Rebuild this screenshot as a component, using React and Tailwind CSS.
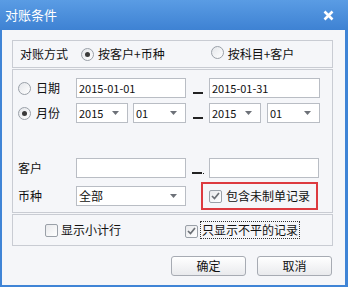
import React from "react";

const font = { fontFamily: '"Noto Sans CJK SC", "Noto Sans", sans-serif' };

function Radio({ checked }) {
  return (
    <span className="relative inline-flex h-[13px] w-[13px] shrink-0 items-center justify-center rounded-full border border-[#9aa0a8] bg-gradient-to-br from-[#e4e6ea] to-white">
      {checked && <span className="h-[5px] w-[5px] rounded-full bg-[#3a3a3a]" />}
    </span>
  );
}

function Check({ checked }) {
  return (
    <span className="inline-flex h-[13px] w-[13px] shrink-0 items-center justify-center rounded-[2px] border border-[#9aa0a8] bg-gradient-to-br from-[#e8e9ec] to-white">
      {checked && (
        <svg width="9" height="8" viewBox="0 0 9 8">
          <path d="M1 4 L3.5 6.5 L8 1" fill="none" stroke="#6b6f75" strokeWidth="1.7" />
        </svg>
      )}
    </span>
  );
}

function Arrow() {
  return (
    <svg width="7" height="4" viewBox="0 0 7 4" className="shrink-0">
      <path d="M0 0 L7 0 L3.5 4 Z" fill="#6d7178" />
    </svg>
  );
}

function Field({ w, children }) {
  return (
    <div
      className="flex h-[20px] shrink-0 items-center border border-[#b9bdc4] bg-white pl-[2px] text-[11px] text-[#111]"
      style={{ width: w }}
    >
      {children}
    </div>
  );
}

function Select({ w, value, cjk }) {
  return (
    <div
      className={
        cjk
          ? "flex h-[20px] shrink-0 items-center justify-between border border-[#b9bdc4] bg-white pl-[2px] pr-[8px] text-[12px] text-[#111]"
          : "flex h-[20px] shrink-0 items-center justify-between border border-[#b9bdc4] bg-white pl-[2px] pr-[8px] text-[11px] text-[#111]"
      }
      style={{ width: w }}
    >
      <span>{value}</span>
      <Arrow />
    </div>
  );
}

function Dash({ dot }) {
  return (
    <div className="flex h-[20px] w-[23px] shrink-0 items-end justify-center pb-[4px]">
      <div className="h-[2px] w-[10px] bg-[#222]" />
      {dot && <div className="ml-[1px] h-[1px] w-[1px] bg-[#222]" />}
    </div>
  );
}

export default function App() {
  return (
    <div
      className="flex h-[287px] w-[348px] flex-col overflow-hidden bg-[#3f84d6] text-[12px] text-[#111]"
      style={font}
    >
      <div className="flex h-[30px] shrink-0 items-center justify-between bg-gradient-to-b from-[#5a9ce4] to-[#3e82d3] pl-[5px] pr-[14px]">
        <span className="text-[13px] text-white">对账条件</span>
        <svg width="11" height="11" viewBox="0 0 11 11">
          <path d="M1.5 1.5 L9.5 9.5 M9.5 1.5 L1.5 9.5" stroke="white" strokeWidth="2.6" />
        </svg>
      </div>

      <div className="mb-[2px] ml-[2px] mr-[3px] flex flex-1 flex-col bg-[#f5f6f9] pl-[10px] pr-[12px] pt-[10px]">
        {/* box 1 */}
        <div className="flex h-[28px] items-center border border-[#c9ccd3] pl-[7px]">
          <span className="w-[61px]">对账方式</span>
          <Radio checked />
          <span className="ml-[4px]">按客户+币种</span>
          <span className="ml-[46px]">
            <Radio />
          </span>
          <span className="ml-[4px]">按科目+客户</span>
        </div>

        {/* box 2 */}
        <div className="mt-px flex h-[144px] flex-col border border-[#c9ccd3] pl-[5px] pt-[8px]">
          <div className="flex h-[20px] items-center">
            <Radio />
            <span className="ml-[5px] w-[40px]">日期</span>
            <Field w={110}>2015-01-01</Field>
            <Dash />
            <Field w={111}>2015-01-31</Field>
          </div>
          <div className="mt-[5px] flex h-[20px] items-center">
            <Radio checked />
            <span className="ml-[5px] w-[40px]">月份</span>
            <Select w={52} value="2015" />
            <div className="w-[5px]" />
            <Select w={53} value="01" />
            <Dash />
            <Select w={52} value="2015" />
            <div className="w-[6px]" />
            <Select w={53} value="01" />
          </div>
          <div className="mt-[35px] flex h-[20px] items-center">
            <span className="w-[58px]">客户</span>
            <Field w={110} />
            <Dash dot />
            <Field w={110} />
          </div>
          <div className="mt-[4px] flex h-[28px] items-center">
            <span className="w-[58px]">币种</span>
            <Select w={110} value="全部" cjk />
            <div className="ml-[15px] flex h-[28px] w-[117px] items-center border-2 border-[#dd3a40] pl-[6px]">
              <Check checked />
              <span className="ml-[4px]">包含未制单记录</span>
            </div>
          </div>
        </div>

        {/* box 3 */}
        <div className="mt-px flex h-[32px] items-center border border-[#c9ccd3] pl-[32px]">
          <Check />
          <span className="ml-[3px]">显示小计行</span>
          <span className="ml-[64px]">
            <Check checked />
          </span>
          <span className="ml-[2px] border border-dotted border-[#333] px-px leading-[16px]">
            只显示不平的记录
          </span>
        </div>

        <div className="mt-[10px] flex justify-end gap-[11px] pr-px">
          <button className="h-[20px] w-[75px] rounded-[3px] border border-[#a7abb3] bg-gradient-to-b from-white to-[#e9eaed] text-[12px]">
            确定
          </button>
          <button className="h-[20px] w-[75px] rounded-[3px] border border-[#a7abb3] bg-gradient-to-b from-white to-[#e9eaed] text-[12px]">
            取消
          </button>
        </div>
      </div>
    </div>
  );
}
